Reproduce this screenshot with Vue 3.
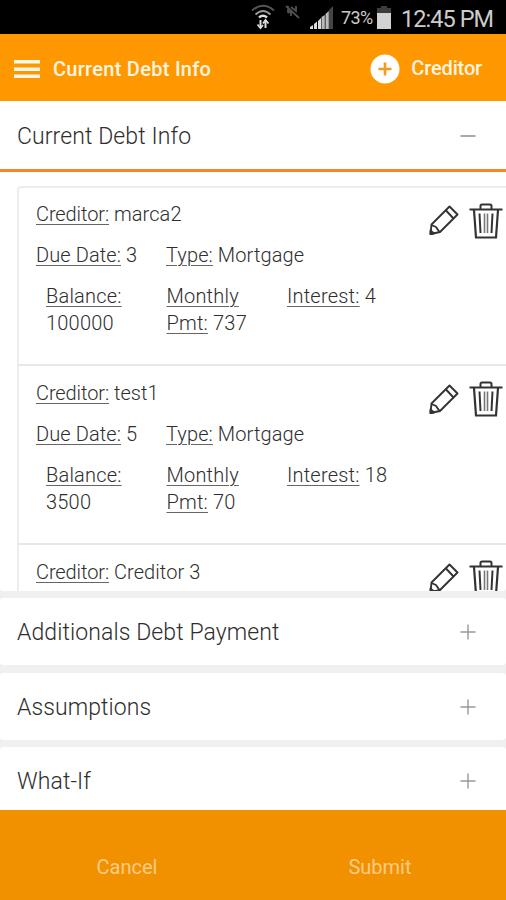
<script setup>
const debts = [
  { name: 'marca2', due: 3, type: 'Mortgage', balance: 100000, payment: 737, interest: 4 },
  { name: 'test1', due: 5, type: 'Mortgage', balance: 3500, payment: 70, interest: 18 },
  { name: 'Creditor 3' },
]
const sections = ['Additionals Debt Payment', 'Assumptions', 'What-If']
</script>

<template>
  <div class="screen">
    <div class="status">
      <svg class="wifi" width="24" height="26" viewBox="0 0 24 26" fill="none" stroke-width="2">
        <path d="M1 6.5Q12-3 23 6.5" stroke="#555" />
        <path d="M4.5 10.5Q12 3.500 19.500 10.500" stroke="#999" />
        <path d="M8 13.500Q12 10 16 13.500" stroke="#ddd" stroke-width="2.500" />
        <path d="M9.500 24V16M14.500 16V24" stroke="#ddd" />
        <path d="M6.500 20.500L9.500 24L12 21M12 19.500L14.500 16L17.500 19.500" stroke="#ddd" stroke-width="1.800" />
      </svg>
      <svg class="muted" width="15" height="14" viewBox="0 0 15 14" fill="none" stroke="#505050" stroke-width="1.800">
        <path d="M1 1L14 13M3 1V8M3 8L6 5M6 2L11 6V1M6 6V11" />
      </svg>
      <svg class="signal" width="24" height="23" viewBox="0 0 24 23">
        <path d="M0 23V21L3 19V23ZM4 23V18L7 15.500V23ZM8 23V15L11 12V23Z" fill="#ddd" />
        <path d="M11.500 23V11L14.800 9V23ZM15.500 23V8L18.800 5V23Z" fill="#bbb" />
        <path d="M19 23V4L23 0V23Z" fill="#444" />
      </svg>
      <span class="percent">73%</span>
      <svg class="battery" width="14" height="23" viewBox="0 0 14 23">
        <path d="M4 0H10V2H14V8H0V2H4Z" fill="#3c3c3c" />
        <path d="M0 7H14V23H0Z" fill="#d2d2d2" />
      </svg>
      <span class="clock">12:45 PM</span>
    </div>

    <header class="bar">
      <svg width="28" height="20" viewBox="0 0 28 20" fill="#fff8ea">
        <path d="M1 1H27V4.500H1ZM1 8.500H27V12H1ZM1 15.500H27V19H1Z" />
      </svg>
      <span class="title">Current Debt Info</span>
      <svg class="add" width="30" height="30" viewBox="0 0 30 30">
        <circle cx="15" cy="15" r="14.500" fill="#fff" />
        <path d="M15 8.500V21.500M8.500 15H21.500" stroke="#f59a20" stroke-width="2.600" />
      </svg>
      <span class="add-label">Creditor</span>
    </header>

    <section class="open">
      <div class="head">
        <span>Current Debt Info</span>
        <svg class="sign" width="16" height="16" viewBox="0 0 16 16" stroke="#8c8c8c" stroke-width="1.600"><path d="M0.500 8H15.500" /></svg>
      </div>
      <div class="list">
        <article v-for="d in debts" :key="d.name" class="card">
          <div class="line top">
            <p><u>Creditor:</u> {{ d.name }}</p>
            <svg class="pencil" width="30" height="30" viewBox="0 0 30 30" fill="none" stroke="#333" stroke-width="1.900" stroke-linejoin="round">
              <path d="M20.500 1.500L28.500 9.500L11 27L1.500 29L2.500 19.500Z" />
              <path d="M17 5.500L24.500 13.500M2.500 20L7 22L10.500 27" />
              <path d="M1.500 25.500L5 28.500L1.500 29Z" fill="#333" />
            </svg>
            <svg class="trash" width="34" height="36" viewBox="0 0 34 36" fill="none" stroke="#333" stroke-width="2">
              <path d="M0.500 6.500H33.500" stroke-width="2.200" />
              <path d="M11.500 6V3Q11.500 1.500 13 1.500H21Q22.500 1.500 22.500 3V6" />
              <path d="M5 7L7 34.500H27L29 7" stroke-width="2.200" />
              <path d="M10.500 10.500L11.500 30M23.500 10.500L22.500 30" />
              <path d="M15.500 10.500V30M18.500 10.500V30" stroke="#777" stroke-width="1.600" />
            </svg>
          </div>
          <template v-if="d.type">
            <div class="line middle">
              <p><u>Due Date:</u> {{ d.due }}</p>
              <p><u>Type:</u> {{ d.type }}</p>
            </div>
            <div class="line bottom">
              <p><u>Balance:</u> {{ d.balance }}</p>
              <p><u>Monthly Pmt:</u> {{ d.payment }}</p>
              <p><u>Interest:</u> {{ d.interest }}</p>
            </div>
          </template>
        </article>
      </div>
    </section>

    <section v-for="s in sections" :key="s" class="head closed">
      <span>{{ s }}</span>
      <svg class="sign" width="16" height="16" viewBox="0 0 16 16" stroke="#999" stroke-width="1.400"><path d="M0.500 8H15.500M8 0.500V15.500" /></svg>
    </section>

    <footer>
      <span>Cancel</span>
      <span>Submit</span>
    </footer>
  </div>
</template>

<style>
body { margin: 0; }
</style>

<style scoped>
.screen {
  width: 506px;
  height: 900px;
  overflow: hidden;
  display: flex;
  flex-direction: column;
  background: #eff0f1;
  font-family: Roboto, sans-serif;
  color: #444;
}
.status {
  height: 34px;
  flex: none;
  display: flex;
  align-items: flex-start;
  background: #000;
  color: #ccc;
}
.wifi { margin: 4px 0 0 251px; }
.muted { margin: 5px 0 0 10px; }
.signal { margin: 6px 0 0 10px; }
.percent { width: 35px; margin-left: 7px; font-size: 18px; line-height: 36px; letter-spacing: -0.6px; }
.battery { margin: 6px 0 0 1px; }
.clock { margin-left: 10px; font-size: 23.500px; line-height: 38px; letter-spacing: -0.95px; white-space: nowrap; }
.bar {
  height: 67px;
  flex: none;
  box-sizing: border-box;
  padding: 2px 24px 0 13px;
  display: flex;
  align-items: center;
  background: #ff9800;
  color: #fff5e2;
  font-size: 20px;
  font-weight: 500;
}
.title { margin-left: 12px; letter-spacing: 0.28px; }
.add { margin-left: auto; margin-right: 11px; }
.add-label { margin-top: -1px; letter-spacing: -0.15px; }
.open {
  height: 490px;
  flex: none;
  margin-bottom: 7px;
  overflow: hidden;
  background: #fff;
  border-radius: 0 0 3px 3px;
}
.head {
  height: 68px;
  box-sizing: border-box;
  padding: 2px 30px 0 17px;
  display: flex;
  align-items: center;
  justify-content: space-between;
  font-size: 23px;
  font-weight: 300;
  letter-spacing: 0.1px;
  color: #2e2e2e;
}
.sign { margin-top: -1px; }
.open .head { height: 71px; border-bottom: 3px solid #f5862a; }
.closed {
  flex: none;
  height: 67px;
  margin-bottom: 7.500px;
  background: #fff;
  border-radius: 3px;
}
.list {
  margin: 14px 0 0 17px;
  border-left: 2px solid #eceeee;
  border-top: 2px solid #eceeee;
  border-top-left-radius: 4px;
}
.card {
  height: 179px;
  box-sizing: border-box;
  padding: 14px 0 0 17px;
  border-bottom: 2px solid #e6e8e8;
  font-size: 20px;
  line-height: 26.700px;
  font-weight: 300;
  letter-spacing: 0.1px;
  color: #2e2e2e;
}
.card:first-child { height: 178px; padding-top: 13px; }
p { margin: 0; }
u { text-decoration-thickness: 1px; text-decoration-color: #666; text-underline-offset: 3px; }
.line { display: flex; align-items: flex-start; }
.top { height: 41px; letter-spacing: 0.08px; }
.top u { letter-spacing: -0.1px; }
.pencil { margin: 4px 0 0 auto; }
.trash { margin: 2px 3px 0 10px; }
.card:not(:first-child) .trash { margin-top: 1px; }
.middle { height: 41px; }
.middle p:first-child { width: 130px; }
.bottom { padding-left: 10px; letter-spacing: 0.2px; }
.bottom p { width: 100px; margin-right: 20.500px; }
.bottom p:last-child { width: 120px; margin-right: 0; }
footer {
  flex: none;
  height: 90px;
  margin-top: -11.500px;
  z-index: 1;
  box-sizing: border-box;
  padding-top: 45px;
  display: grid;
  grid-template-columns: 1fr 1fr;
  text-align: center;
  font-size: 20px;
  line-height: 24px;
  background: #f29100;
  color: #ffcb85;
}
footer span { padding-left: 1px; }
</style>
